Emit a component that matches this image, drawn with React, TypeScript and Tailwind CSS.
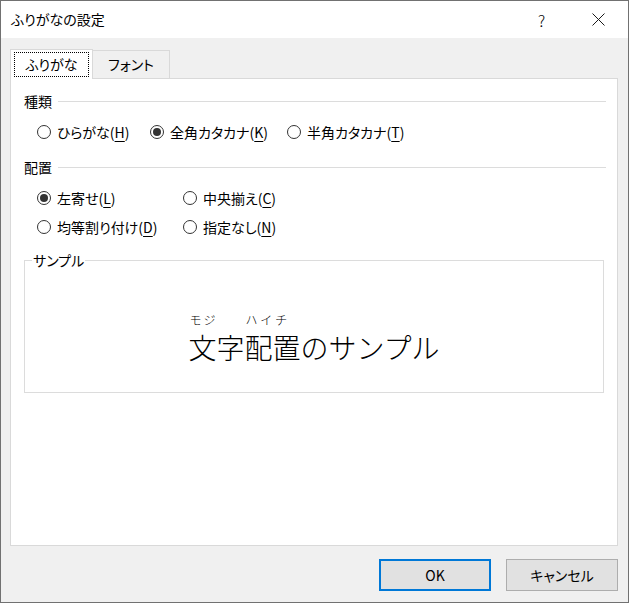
import type { ReactNode } from "react"

const FONT = "font-['Noto_Sans_CJK_JP','Noto_Sans',sans-serif]"

function Key({ k }: { k: string }) {
  return <span className="underline underline-offset-[3px] decoration-1">{k}</span>
}

function Radio({ checked, children, width }: { checked?: boolean; children: ReactNode; width?: string }) {
  return (
    <label className={`flex items-center gap-[6px] leading-[20px] ${width ?? ""}`}>
      <span className="flex h-[14px] w-[14px] shrink-0 items-center justify-center rounded-full border border-[#333333] bg-white">
        {checked && <span className="h-[8px] w-[8px] rounded-full bg-[#333333]" />}
      </span>
      <span className="whitespace-nowrap [font-feature-settings:'palt']">{children}</span>
    </label>
  )
}

function GroupHeader({ title }: { title: string }) {
  return (
    <div className="flex items-center gap-[6px] leading-[20px]">
      <span className="[font-feature-settings:'palt']">{title}</span>
      <div className="h-px flex-1 bg-[#dcdcdc]" />
    </div>
  )
}

export default function App() {
  return (
    <div className={`flex h-[603px] w-[629px] flex-col border border-[#717171] text-[14px] text-black ${FONT}`}>
      {/* Title bar */}
      <div className="flex h-[37px] items-center bg-white pl-[10px] pr-px">
        <span className="flex-1 text-[14px] [font-feature-settings:'palt']">ふりがなの設定</span>
        <span className="w-[57px] text-center text-[16px] font-light leading-none">?</span>
        <span className="flex w-[57px] justify-center">
          <svg width="13" height="13" viewBox="0 0 13 13" fill="none" stroke="#1a1a1a" strokeWidth="1">
            <path d="M0.5 0.5 L12.5 12.5 M12.5 0.5 L0.5 12.5" />
          </svg>
        </span>
      </div>

      {/* Body */}
      <div className="flex flex-1 flex-col bg-[#f0f0f0] pl-[9px] pr-[10px] pt-[11px]">
        {/* Tabs */}
        <div className="flex items-end">
          <div className="relative z-10 -mb-px flex h-[30px] w-[83px] items-center justify-center border border-b-0 border-[#d9d9d9] bg-white">
            <span className="flex h-[25px] w-[75px] items-center justify-center border border-dotted border-black [font-feature-settings:'palt']">
              ふりがな
            </span>
          </div>
          <div className="flex h-[28px] w-[77px] items-center justify-center border border-b-0 border-l-0 border-[#d9d9d9] [font-feature-settings:'palt']">
            フォント
          </div>
        </div>

        {/* Panel */}
        <div className="h-[468px] border border-[#d9d9d9] bg-white pl-[13px] pr-[11px] pt-[12px]">
          <GroupHeader title="種類" />
          <div className="mt-[11px] flex pl-[13px]">
            <Radio width="w-[113px]">
              ひらがな(<Key k="H" />)
            </Radio>
            <Radio checked width="w-[137px]">
              全角カタカナ(<Key k="K" />)
            </Radio>
            <Radio>
              半角カタカナ(<Key k="T" />)
            </Radio>
          </div>

          <div className="mt-[15px]">
            <GroupHeader title="配置" />
          </div>
          <div className="mt-[11px] grid grid-cols-[146px_1fr] gap-y-[9px] pl-[13px]">
            <Radio checked>
              左寄せ(<Key k="L" />)
            </Radio>
            <Radio>
              中央揃え(<Key k="C" />)
            </Radio>
            <Radio>
              均等割り付け(<Key k="D" />)
            </Radio>
            <Radio>
              指定なし(<Key k="N" />)
            </Radio>
          </div>

          <fieldset className="mr-[2px] mt-[13px] h-[143px] border border-[#dcdcdc] px-0">
            <legend className="ml-[7px] px-px leading-[20px] [font-feature-settings:'palt']">サンプル</legend>
            <div className="flex justify-center pt-[43px]">
              <div className="flex items-end text-[28px] font-light leading-[32px]">
                <span className="flex flex-col items-start">
                  <span className="mb-[4px] pl-px text-[12px] leading-[14px] tracking-[2px]">モジ</span>
                  <span>文字</span>
                </span>
                <span className="flex flex-col items-start">
                  <span className="mb-[4px] pl-px text-[12px] leading-[14px] tracking-[3px]">ハイチ</span>
                  <span>配置</span>
                </span>
                <span>のサンプル</span>
              </div>
            </div>
          </fieldset>
        </div>

        {/* Buttons */}
        <div className="mt-[13px] flex justify-end gap-[15px]">
          <button className="h-[32px] w-[112px] border-2 border-[#0078d7] bg-[#e1e1e1] text-[14px]">OK</button>
          <button className="h-[32px] w-[112px] border border-[#adadad] bg-[#e1e1e1] text-[14px] [font-feature-settings:'palt']">
            キャンセル
          </button>
        </div>
      </div>
    </div>
  )
}
